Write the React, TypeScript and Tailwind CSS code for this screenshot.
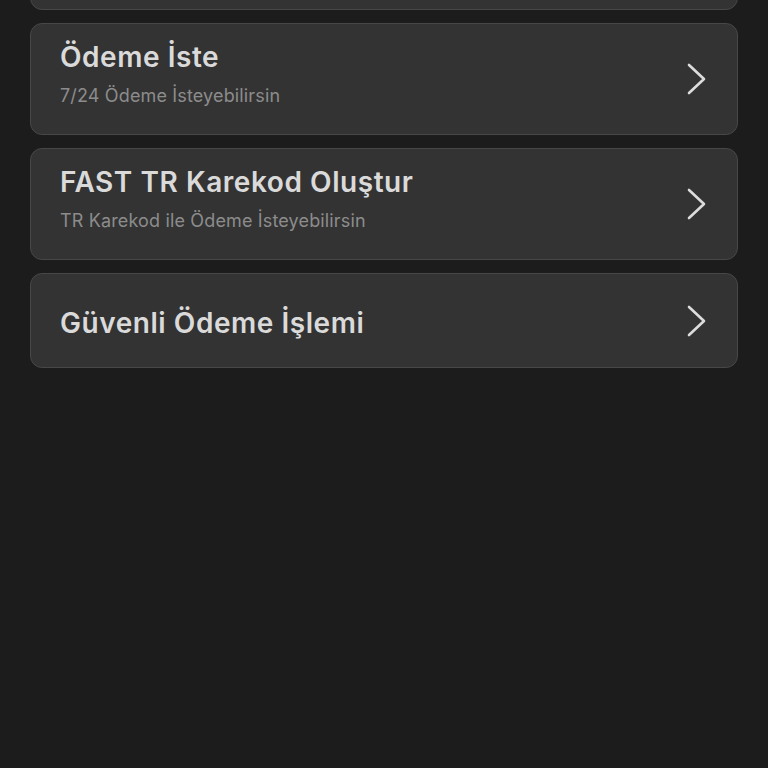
import React from "react";

type Item = { title: string; subtitle?: string };

const items: Item[] = [
  { title: "Ödeme İste", subtitle: "7/24 Ödeme İsteyebilirsin" },
  { title: "FAST TR Karekod Oluştur", subtitle: "TR Karekod ile Ödeme İsteyebilirsin" },
  { title: "Güvenli Ödeme İşlemi" },
];

function Chevron() {
  return (
    <svg width="22" height="34" viewBox="0 0 22 34" fill="none" className="shrink-0 self-center">
      <polyline
        points="4,3 19,17 4,31"
        stroke="#dcdcdc"
        strokeWidth="2.6"
        strokeLinecap="round"
        strokeLinejoin="round"
      />
    </svg>
  );
}

export default function App() {
  return (
    <div
      className="w-[768px] h-[768px] overflow-hidden bg-[#1c1c1c]"
      style={{ fontFamily: "Inter, 'Noto Sans', sans-serif" }}
    >
      <div className="flex flex-col gap-[13px] px-[30px] -mt-[102px]">
        <div className="h-[112px] rounded-[12px] border border-[#474747] bg-[#333333]" />
        {items.map((it) => (
          <div
            key={it.title}
            className={
              it.subtitle
                ? "h-[112px] rounded-[12px] border border-[#474747] bg-[#333333] pl-[29px] pr-[30px] flex items-start justify-between"
                : "h-[95px] rounded-[12px] border border-[#474747] bg-[#333333] pl-[29px] pr-[30px] flex items-center justify-between"
            }
          >
            <div className={it.subtitle ? "flex flex-col pt-[17px]" : "flex flex-col mt-[5px]"}>
              <span className="text-[28px] leading-[32px] font-semibold text-[#dadada] tracking-[0.55px]">
                {it.title}
              </span>
              {it.subtitle && (
                <span className="mt-[12px] text-[18px] leading-[22px] text-[#8c8c8c] tracking-[0.15px]">
                  {it.subtitle}
                </span>
              )}
            </div>
            <Chevron />
          </div>
        ))}
      </div>
    </div>
  );
}
